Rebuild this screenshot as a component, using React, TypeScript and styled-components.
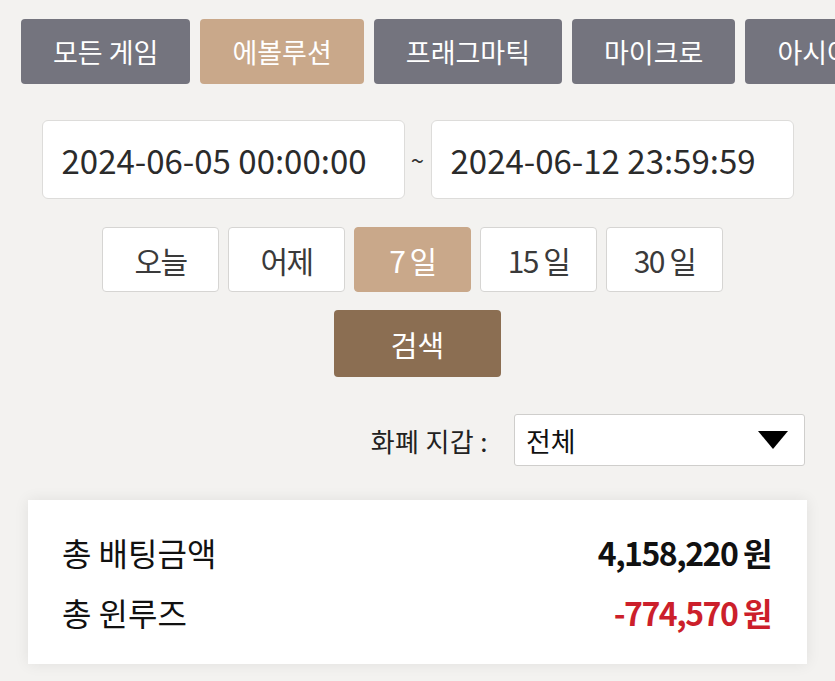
import React from "react";
import styled, { createGlobalStyle } from "styled-components";

const Global = createGlobalStyle`
  html, body { margin: 0; padding: 0; background: #f3f2f0; }
  body { font-family: "Noto Sans CJK KR", "Noto Sans", sans-serif; }
  * { box-sizing: border-box; }
`;

const Page = styled.div`
  width: 835px;
  height: 681px;
  overflow: hidden;
  background: #f3f2f0;
  display: flex;
  flex-direction: column;
`;

const Tabs = styled.div`
  display: flex;
  gap: 10px;
  padding: 19px 0 0 21px;
  white-space: nowrap;
  overflow: hidden;
`;

const Tab = styled.div<{ $active?: boolean }>`
  flex: none;
  height: 65px;
  padding: 0 32px;
  display: flex;
  align-items: center;
  justify-content: center;
  border-radius: 4px;
  background: ${(p) => (p.$active ? "#c9a88a" : "#74747e")};
  color: #fff;
  font-size: 27px;
`;

const DateRow = styled.div`
  display: flex;
  align-items: center;
  justify-content: center;
  margin-top: 36px;
  gap: 5px;
`;

const DateBox = styled.div`
  width: 363px;
  height: 79px;
  background: #fff;
  border: 1px solid #dddcda;
  border-radius: 6px;
  display: flex;
  align-items: center;
  padding-left: 19px;
  color: #2b2b2b;
  font-size: 33px;
  white-space: nowrap;
`;

const Tilde = styled.span`
  width: 16px;
  text-align: center;
  color: #333;
  font-size: 24px;
`;

const PeriodRow = styled.div`
  display: flex;
  justify-content: center;
  gap: 9px;
  margin-top: 28px;
  padding-right: 10px;
`;

const PeriodBtn = styled.div<{ $active?: boolean }>`
  width: 117px;
  height: 65px;
  display: flex;
  align-items: center;
  justify-content: center;
  border-radius: 4px;
  border: 1px solid ${(p) => (p.$active ? "#c9a88a" : "#d6d5d3")};
  background: ${(p) => (p.$active ? "#c9a88a" : "#fff")};
  color: ${(p) => (p.$active ? "#fff" : "#3a3a3a")};
  font-size: 30px;
  letter-spacing: -1.5px;
`;

const SearchRow = styled.div`
  display: flex;
  justify-content: center;
  margin-top: 18px;
`;

const SearchBtn = styled.div`
  width: 167px;
  height: 67px;
  display: flex;
  align-items: center;
  justify-content: center;
  border-radius: 4px;
  background: #8b6e52;
  color: #fff;
  font-size: 29px;
`;

const CurrencyRow = styled.div`
  display: flex;
  justify-content: flex-end;
  align-items: center;
  gap: 26px;
  margin-top: 37px;
  padding-right: 30px;
`;

const Label = styled.span`
  font-size: 26px;
  color: #222;
  letter-spacing: 0.4px;
`;

const Select = styled.div`
  width: 291px;
  height: 52px;
  background: #fff;
  border: 1px solid #cfcecc;
  border-radius: 3px;
  display: flex;
  align-items: center;
  justify-content: space-between;
  padding: 0 16px 0 11px;
  font-size: 27px;
  color: #111;
`;

const Card = styled.div`
  margin: 34px 28px 0 28px;
  height: 164px;
  background: #fff;
  box-shadow: 0 0 14px rgba(0, 0, 0, 0.08);
  display: flex;
  flex-direction: column;
  justify-content: center;
  gap: 18px;
  padding: 0 36px 0 34px;
`;

const SumRow = styled.div`
  display: flex;
  justify-content: space-between;
  align-items: center;
  height: 42px;
`;

const SumLabel = styled.span`
  font-size: 32px;
  color: #111;
`;

const SumValue = styled.span<{ $neg?: boolean }>`
  font-size: 32px;
  font-weight: 700;
  letter-spacing: -1.5px;
  color: ${(p) => (p.$neg ? "#cc1f2b" : "#111")};
`;

export default function App() {
  const tabs = ["모든 게임", "에볼루션", "프래그마틱", "마이크로", "아시아게이밍"];
  const periods = ["오늘", "어제", "7 일", "15 일", "30 일"];
  return (
    <Page>
      <Global />
      <Tabs>
        {tabs.map((t, i) => (
          <Tab key={t} $active={i === 1}>
            {t}
          </Tab>
        ))}
      </Tabs>
      <DateRow>
        <DateBox>2024-06-05 00:00:00</DateBox>
        <Tilde>~</Tilde>
        <DateBox>2024-06-12 23:59:59</DateBox>
      </DateRow>
      <PeriodRow>
        {periods.map((p, i) => (
          <PeriodBtn key={p} $active={i === 2}>
            {p}
          </PeriodBtn>
        ))}
      </PeriodRow>
      <SearchRow>
        <SearchBtn>검색</SearchBtn>
      </SearchRow>
      <CurrencyRow>
        <Label>화폐 지갑 :</Label>
        <Select>
          <span>전체</span>
          <svg width="30" height="18" viewBox="0 0 30 18">
            <polygon points="0,0 30,0 15,18" fill="#000" />
          </svg>
        </Select>
      </CurrencyRow>
      <Card>
        <SumRow>
          <SumLabel>총 배팅금액</SumLabel>
          <SumValue>4,158,220 원</SumValue>
        </SumRow>
        <SumRow>
          <SumLabel>총 윈루즈</SumLabel>
          <SumValue $neg>-774,570 원</SumValue>
        </SumRow>
      </Card>
    </Page>
  );
}
